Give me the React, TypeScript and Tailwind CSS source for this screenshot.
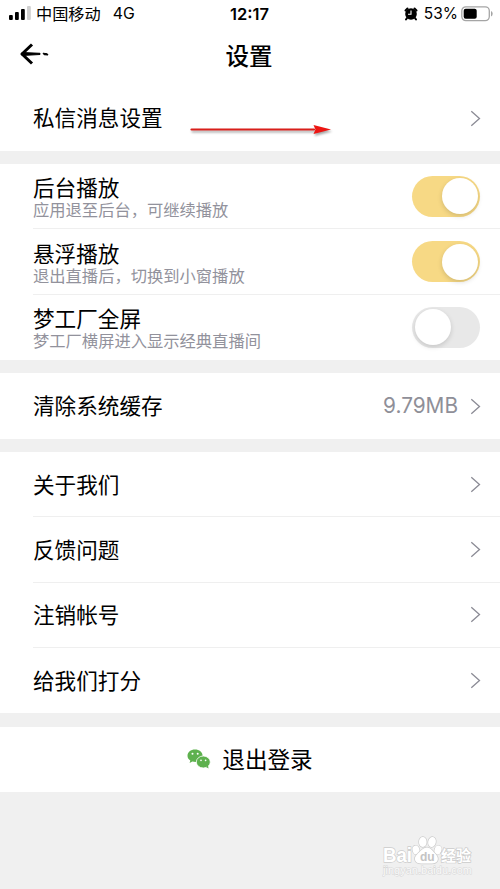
import type { ReactNode } from 'react';

function Chevron() {
  return (
    <svg width="11" height="17" viewBox="0 0 11 17" fill="none" stroke="#8b8b95" strokeWidth="1.3" className="shrink-0">
      <path d="M1.3 1.2 9.5 8.5 1.3 15.8" />
    </svg>
  );
}

function Row({ label, value, line = false }: { label: string; value?: string; line?: boolean }) {
  return (
    <div className={line ? 'ml-[33px] flex h-[65.3px] items-center border-b border-[#efefef] pr-[19px]' : 'ml-[33px] flex h-[65.3px] items-center pr-[19px]'}>
      <span className="grow pb-[2px] text-[21.6px] leading-none">{label}</span>
      {value && <span className="mr-[12px] font-['Inter'] text-[20.8px] leading-none text-[#8f8f98]">{value}</span>}
      <Chevron />
    </div>
  );
}

function ToggleRow({ label, note, on = false, line = false }: { label: string; note: string; on?: boolean; line?: boolean }) {
  return (
    <div className={line ? 'ml-[33px] flex h-[65.3px] items-center border-b border-[#efefef] pr-5' : 'ml-[33px] flex h-[65.3px] items-center pr-5'}>
      <div className="grow pt-[3px]">
        <div className="mb-px text-[21.6px] leading-[22px]">{label}</div>
        <div className="text-[16.3px] leading-[20px] text-[#92929c]">{note}</div>
      </div>
      <div className={on ? 'flex h-[41px] w-[68px] items-center justify-end rounded-full bg-[#f7d985] px-[2.5px]' : 'flex h-[41px] w-[68px] items-center rounded-full bg-[#e8e8e8] px-[2.5px]'}>
        <div className="size-9 rounded-full bg-white shadow-[0_2px_5px_rgba(0,0,0,0.15)]" />
      </div>
    </div>
  );
}

function Section({ children }: { children: ReactNode }) {
  return <section className="mb-[13.4px] bg-white">{children}</section>;
}

function StatusBar() {
  return (
    <div className="grid h-[27px] grid-cols-[1fr_auto_1fr] items-center pl-[9px] pr-[7px]">
      <div className="flex items-center">
        <svg width="22" height="14" viewBox="0 0 22 14">
          <rect x="0" y="9" width="3.8" height="5" rx="1" />
          <rect x="6" y="6" width="3.8" height="8" rx="1" />
          <rect x="12" y="3" width="3.8" height="11" rx="1" />
          <rect x="18" y="0" width="3.8" height="14" rx="1" fill="#cfcfcf" />
        </svg>
        <span className="ml-[5px] text-[16.2px] leading-none">中国移动</span>
        <span className="ml-3 pt-px font-['Inter'] text-[15.8px] leading-none">4G</span>
      </div>
      <span className="mr-[3px] pt-px font-['Inter'] text-[16.5px] font-semibold leading-none">12:17</span>
      <div className="flex items-center justify-end">
        <svg width="14" height="14" viewBox="0 0 14 14">
          <path d="M1.5 3.5 3.5 1.5M12.5 3.5 10.5 1.5M3 11 2 12.5M11 11l1 1.5" stroke="#000" strokeWidth="2" strokeLinecap="round" />
          <circle cx="7" cy="7" r="5.8" />
          <path d="M7 3.5V7.3H4" fill="none" stroke="#fff" strokeWidth="1.1" />
        </svg>
        <span className="ml-[6px] pt-px font-['Inter'] text-[15.5px] leading-none">53%</span>
        <svg width="32" height="16" viewBox="0 0 32 16" className="ml-[3px]">
          <rect x=".8" y=".8" width="27.5" height="13.8" rx="4" fill="none" stroke="#a5a5a5" strokeWidth="1.3" />
          <rect x="2.7" y="2.7" width="13" height="10" rx="2" />
          <path d="M30 5v5.5q1.7-.8 1.7-2.75T30 5Z" fill="#a5a5a5" />
        </svg>
      </div>
    </div>
  );
}

function Watermark() {
  return (
    <svg width="94" height="44" viewBox="0 0 94 44" className="mr-[24px]">
      <g fill="#fff" stroke="#cccccc" strokeWidth="1.4" paintOrder="stroke">
        <text x="1" y="26" textLength="29" lengthAdjust="spacingAndGlyphs" className="font-['Liberation_Sans'] text-[21px] font-bold">Bai</text>
        <ellipse cx="34" cy="14" rx="3.4" ry="4.4" transform="rotate(-15 34 14)" />
        <ellipse cx="40.8" cy="6" rx="3.8" ry="5" />
        <ellipse cx="50" cy="6" rx="3.8" ry="5" transform="rotate(12 50 6)" />
        <ellipse cx="56" cy="14" rx="3.4" ry="4.4" transform="rotate(20 56 14)" />
        <path d="M45 11.5c4 0 6 4 9 7 4 5 1 9-4 9H39c-6 0-8-5-4-9 3-3 6-7 10-7Z" />
        <text x="59" y="25" textLength="30" className="font-['Noto_Sans_CJK_SC'] text-[15px] font-bold">经验</text>
      </g>
      <text x="38" y="25" fill="#c4c4c4" className="font-['Liberation_Sans'] text-[12px] font-bold">du</text>
      <text x="1" y="38" textLength="89" fill="#fafafa" stroke="#d6d6d6" strokeWidth="1" paintOrder="stroke" className="font-['Liberation_Sans'] text-[11px]">jingyan.baidu.com</text>
    </svg>
  );
}

export default function App() {
  return (
    <div className="flex h-[889px] w-[500px] flex-col overflow-hidden bg-[#f0f0f0] font-['Noto_Sans_CJK_SC',sans-serif] text-black">
      <Section>
        <StatusBar />
        <header className="grid h-[58.5px] grid-cols-[1fr_auto_1fr] items-center pr-[2px]">
          <svg width="29" height="24" viewBox="0 0 29 24" fill="none" stroke="#000" className="mb-[5px] ml-5">
            <path d="M12 2.5 2 12 12 21.5" strokeWidth="3" strokeLinejoin="round" />
            <path d="M2 10.5 20 11.3v1.2L2 13.5ZM23 11.2l4.3.6.7 1.2-4-.3Z" fill="#000" strokeWidth="1" />
          </svg>
          <h1 className="pb-px text-[23.5px] font-medium leading-none">设置</h1>
        </header>
        <div className="relative">
          <Row label="私信消息设置" />
          <svg width="146" height="20" viewBox="0 0 146 20" className="absolute left-[188px] top-[35px] drop-shadow-[1px_2px_1px_rgba(0,0,0,0.35)]">
            <path d="M3.5 8.5H126" stroke="#d91f1b" strokeWidth="2.2" strokeLinecap="round" />
            <path d="m125.500 4 17.500 4.500-17.500 4.500 2-4.500Z" fill="#ed1512" />
          </svg>
        </div>
      </Section>
      <Section>
        <ToggleRow label="后台播放" note="应用退至后台，可继续播放" on line />
        <ToggleRow label="悬浮播放" note="退出直播后，切换到小窗播放" on line />
        <ToggleRow label="梦工厂全屏" note="梦工厂横屏进入显示经典直播间" />
      </Section>
      <Section>
        <Row label="清除系统缓存" value="9.79MB" />
      </Section>
      <Section>
        <Row label="关于我们" line />
        <Row label="反馈问题" line />
        <Row label="注销帐号" line />
        <Row label="给我们打分" />
      </Section>
      <Section>
        <button className="flex h-[65.3px] w-full items-center justify-center">
          <svg width="24" height="20" viewBox="0 0 24 20" className="mr-[11px]">
            <path d="M8 .5C3.7.5.5 3.2.5 6.7c0 2 1 3.700 2.800 4.800L2.600 14l2.800-1.400c1 .3 2 .4 3.200.4 4-.2 7-3 7-6.300C15.600 3.200 12.300.5 8 .5Z" fill="#5eb14e" />
            <ellipse cx="16.300" cy="13" rx="7" ry="6" fill="#5eb14e" stroke="#fff" strokeWidth=".8" />
            <path d="m19 18 2.500 1.500-.5-3Z" fill="#5eb14e" />
            <g fill="#fff">
              <circle cx="5.500" cy="4.800" r="1" />
              <circle cx="10.700" cy="4.800" r="1" />
              <circle cx="14" cy="11.300" r=".85" />
              <circle cx="18.600" cy="11.300" r=".85" />
            </g>
          </svg>
          <span className="text-[22.600px] leading-none">退出登录</span>
        </button>
      </Section>
      <footer className="mt-auto flex justify-end pb-[9px]">
        <Watermark />
      </footer>
    </div>
  );
}
